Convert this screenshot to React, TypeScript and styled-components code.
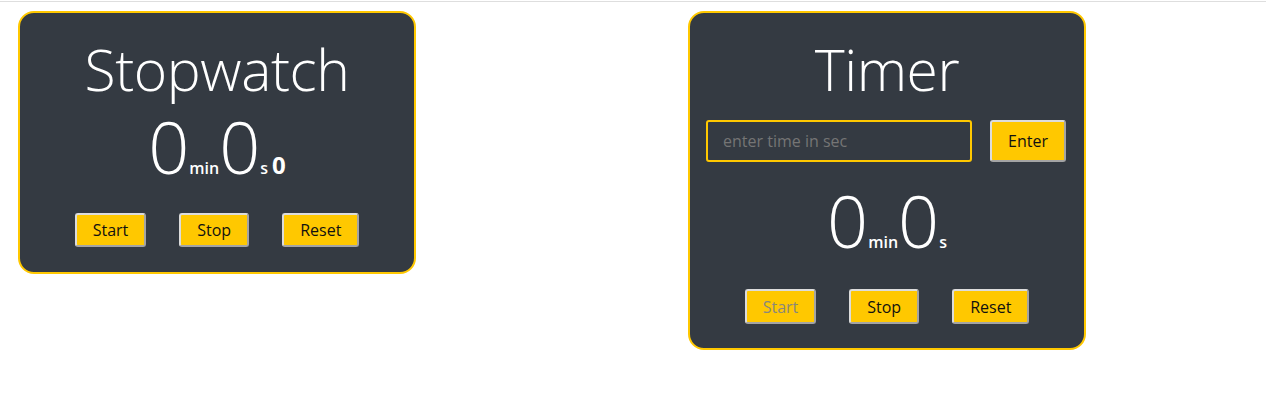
import React from "react";
import styled, { createGlobalStyle } from "styled-components";

const GlobalStyle = createGlobalStyle`
  html, body {
    margin: 0;
    padding: 0;
    background: #ffffff;
    font-family: "Open Sans", "Noto Sans", sans-serif;
  }
`;

const TopRule = styled.div`
  margin-top: 1px;
  height: 1px;
  background: #dedede;
`;

const Board = styled.main`
  display: flex;
  align-items: flex-start;
  gap: 272px;
  padding: 9px 0 0 18px;
`;

const Card = styled.section<{ $bottom: number }>`
  box-sizing: border-box;
  width: 398px;
  background: #343a42;
  border: 2px solid #ffc800;
  border-radius: 16px;
  padding: 24px 0 ${(p) => p.$bottom}px;
  color: #ffffff;
  display: flex;
  flex-direction: column;
  align-items: stretch;
`;

const Title = styled.h1`
  margin: 0;
  font-size: 57px;
  line-height: 64px;
  font-weight: 300;
  text-align: center;
  letter-spacing: -0.4px;
`;

const TimeRow = styled.div<{ $top: number }>`
  margin-top: ${(p) => p.$top}px;
  text-align: center;
  line-height: 72px;
  height: 72px;
  white-space: nowrap;
`;

const Big = styled.span`
  font-size: 72px;
  font-weight: 300;
  line-height: 72px;
`;

const Unit = styled.span`
  font-size: 16px;
  font-weight: 600;
  line-height: 1;
`;

const Centi = styled.span`
  font-size: 24px;
  font-weight: 700;
  line-height: 1;
  margin-left: 4px;
`;

const ButtonRow = styled.div<{ $top: number }>`
  margin-top: ${(p) => p.$top}px;
  display: flex;
  justify-content: center;
  gap: 33px;
`;

const Button = styled.button<{ $h?: number }>`
  box-sizing: border-box;
  height: ${(p) => p.$h ?? 34}px;
  padding: 0 16px;
  font-family: "Open Sans", "Noto Sans", sans-serif;
  font-size: 16px;
  line-height: 18px;
  color: #111111;
  background: #ffc800;
  border-width: 2px;
  border-style: solid;
  border-color: #dcdcdc #a4a4a4 #a4a4a4 #dcdcdc;
  border-radius: 3px;
  cursor: pointer;

  &:disabled {
    color: #8a877c;
    cursor: default;
  }
`;

const InputRow = styled.div`
  margin-top: 19px;
  display: flex;
  gap: 18px;
  padding-left: 16px;
`;

const TimeInput = styled.input`
  box-sizing: border-box;
  width: 266px;
  height: 42px;
  padding: 0 15px;
  background: transparent;
  border: 2px solid #ffc800;
  border-radius: 3px;
  font-family: "Open Sans", "Noto Sans", sans-serif;
  font-size: 16px;
  color: #ffffff;
  outline: none;

  &::placeholder {
    color: #757575;
  }
`;

export default function App() {
  return (
    <>
      <GlobalStyle />
      <TopRule />
      <Board>
        <Card $bottom={25}>
          <Title>Stopwatch</Title>
          <TimeRow $top={9}>
            <Big>0</Big>
            <Unit>min</Unit>
            <Big>0</Big>
            <Unit>s</Unit>
            <Centi>0</Centi>
          </TimeRow>
          <ButtonRow $top={31}>
            <Button>Start</Button>
            <Button>Stop</Button>
            <Button>Reset</Button>
          </ButtonRow>
        </Card>
        <Card $bottom={24}>
          <Title>Timer</Title>
          <InputRow>
            <TimeInput placeholder="enter time in sec" />
            <Button $h={42}>Enter</Button>
          </InputRow>
          <TimeRow $top={22}>
            <Big>0</Big>
            <Unit>min</Unit>
            <Big>0</Big>
            <Unit>s</Unit>
          </TimeRow>
          <ButtonRow $top={33}>
            <Button disabled $h={35}>Start</Button>
            <Button $h={35}>Stop</Button>
            <Button $h={35}>Reset</Button>
          </ButtonRow>
        </Card>
      </Board>
    </>
  );
}
